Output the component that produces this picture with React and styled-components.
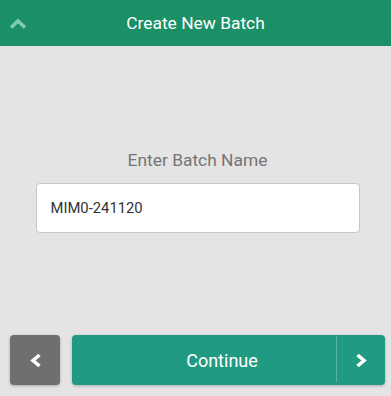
import React from "react";
import styled, { createGlobalStyle } from "styled-components";

const GlobalStyle = createGlobalStyle`
  html, body {
    margin: 0;
    padding: 0;
    background: #e4e4e4;
    font-family: Roboto, "Liberation Sans", sans-serif;
  }
`;

const Screen = styled.div`
  width: 391px;
  height: 396px;
  display: flex;
  flex-direction: column;
  background: #e4e4e4;
`;

const Header = styled.header`
  height: 46px;
  background: #1b8f66;
  display: flex;
  align-items: center;
  justify-content: center;
  position: relative;
  color: #fff;
  font-size: 17.4px;
`;

const CollapseIcon = styled.span`
  position: absolute;
  left: 9px;
  top: 18px;
  display: flex;
`;

const Content = styled.main`
  flex: 1;
  display: flex;
  flex-direction: column;
  align-items: center;
  padding-top: 104px;
`;

const Label = styled.div`
  color: #757575;
  font-size: 17.4px;
  line-height: 20px;
  margin-bottom: 13px;
  margin-left: 4px;
`;

const Input = styled.input`
  box-sizing: border-box;
  width: 324px;
  height: 50px;
  margin-left: 4px;
  border: 1px solid #c8c8c8;
  border-radius: 4px;
  background: #fff;
  padding: 0 14px;
  font-family: Roboto, "Liberation Sans", sans-serif;
  font-size: 14.8px;
  color: #333;
  outline: none;
`;

const Footer = styled.footer`
  display: flex;
  gap: 12px;
  padding: 0 6px 11px 10px;
`;

const BackButton = styled.button`
  width: 50px;
  height: 50px;
  border: none;
  border-radius: 4px;
  background: #6f6f6f;
  display: flex;
  align-items: center;
  justify-content: center;
  box-shadow: 0 1px 3px rgba(0, 0, 0, 0.25);
  padding: 0;
`;

const ContinueButton = styled.button`
  flex: 1;
  height: 50px;
  border: none;
  border-radius: 4px;
  background: #219a84;
  color: #fff;
  display: flex;
  align-items: stretch;
  padding: 0;
  box-shadow: 0 1px 3px rgba(0, 0, 0, 0.25);
  font-family: Roboto, "Liberation Sans", sans-serif;
  font-size: 18px;
`;

const ButtonLabel = styled.span`
  flex: 1;
  display: flex;
  align-items: center;
  justify-content: center;
  padding-left: 36px;
`;

const ArrowPart = styled.span`
  width: 48px;
  display: flex;
  align-items: center;
  justify-content: center;
  border-left: 1px solid rgba(255, 255, 255, 0.25);
  margin: 1px 0 3px;
  padding-top: 2px;
`;

const Chevron = ({ dir, color = "#fff" }) => {
  if (dir === "up") {
    return (
      <svg width="18" height="11" viewBox="0 0 18 11">
        <polyline points="2,9.5 9,3 16,9.5" fill="none" stroke={color} strokeWidth="3.6" />
      </svg>
    );
  }
  const pts = dir === "left" ? "10.5,2 4,7.5 10.5,13" : "2.5,2 9,7.5 2.5,13";
  return (
    <svg width="13" height="15" viewBox="0 0 13 15">
      <polyline points={pts} fill="none" stroke={color} strokeWidth="3.6" />
    </svg>
  );
};

export default function App() {
  return (
    <>
      <GlobalStyle />
      <Screen>
        <Header>
          <CollapseIcon>
            <Chevron dir="up" color="#80cbb0" />
          </CollapseIcon>
          Create New Batch
        </Header>
        <Content>
          <Label>Enter Batch Name</Label>
          <Input defaultValue="MIM0-241120" />
        </Content>
        <Footer>
          <BackButton>
            <Chevron dir="left" />
          </BackButton>
          <ContinueButton>
            <ButtonLabel>Continue</ButtonLabel>
            <ArrowPart>
              <Chevron dir="right" />
            </ArrowPart>
          </ContinueButton>
        </Footer>
      </Screen>
    </>
  );
}
